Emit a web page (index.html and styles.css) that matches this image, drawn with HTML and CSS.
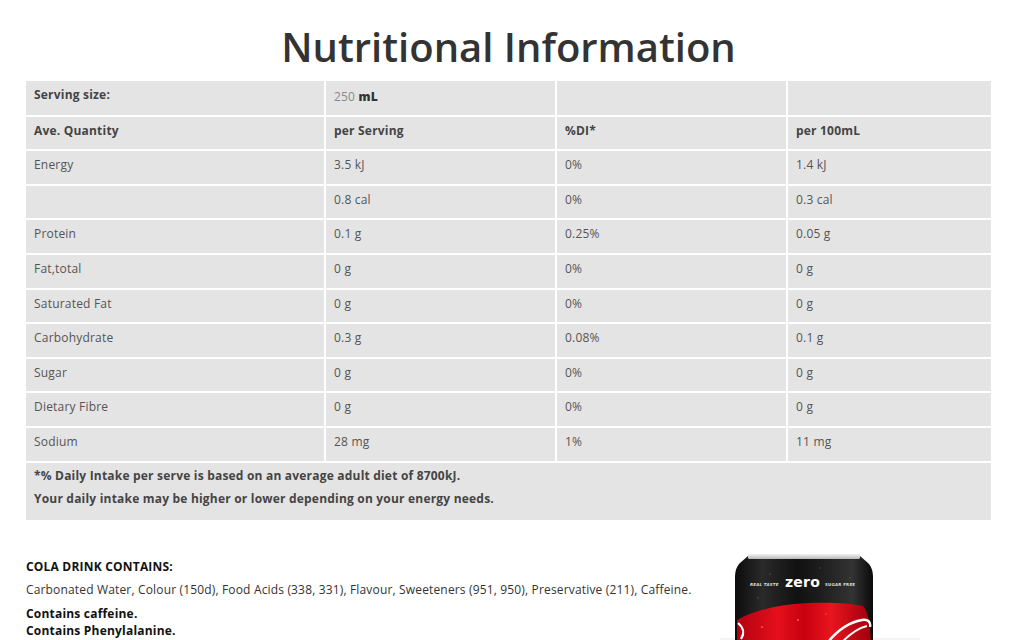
FILE: index.html
```html
<!DOCTYPE html>
<html lang="en">
<head>
<meta charset="utf-8">
<title>Nutritional Information</title>
<link rel="stylesheet" href="styles.css">
</head>
<body>
<main class="page">
  <h1 class="title">Nutritional Information</h1>
  <table class="nutri">
    <colgroup>
      <col class="c1"><col class="c2"><col class="c3"><col class="c4">
    </colgroup>
    <tbody>
      <tr class="head"><td>Serving size:</td><td class="serve"><span class="num">250</span> <b>mL</b></td><td></td><td></td></tr>
      <tr class="head"><td>Ave. Quantity</td><td>per Serving</td><td>%DI*</td><td>per 100mL</td></tr>
      <tr><td>Energy</td><td>3.5 kJ</td><td>0%</td><td>1.4 kJ</td></tr>
      <tr><td></td><td>0.8 cal</td><td>0%</td><td>0.3 cal</td></tr>
      <tr><td>Protein</td><td>0.1 g</td><td>0.25%</td><td>0.05 g</td></tr>
      <tr><td>Fat,total</td><td>0 g</td><td>0%</td><td>0 g</td></tr>
      <tr><td>Saturated Fat</td><td>0 g</td><td>0%</td><td>0 g</td></tr>
      <tr><td>Carbohydrate</td><td>0.3 g</td><td>0.08%</td><td>0.1 g</td></tr>
      <tr><td>Sugar</td><td>0 g</td><td>0%</td><td>0 g</td></tr>
      <tr><td>Dietary Fibre</td><td>0 g</td><td>0%</td><td>0 g</td></tr>
      <tr><td>Sodium</td><td>28 mg</td><td>1%</td><td>11 mg</td></tr>
      <tr class="foot"><td colspan="4">
        <p>*% Daily Intake per serve is based on an average adult diet of 8700kJ.</p>
        <p>Your daily intake may be higher or lower depending on your energy needs.</p>
      </td></tr>
    </tbody>
  </table>

  <section class="ingredients">
    <div class="ing-text">
      <h2 class="ing-title">COLA DRINK CONTAINS:</h2>
      <p class="ing-list">Carbonated Water, Colour (150d), Food Acids (338, 331), Flavour, Sweeteners (951, 950), Preservative (211), Caffeine.</p>
      <p class="ing-warn">Contains caffeine.<br>Contains Phenylalanine.</p>
    </div>
    <div class="can">
      <svg width="220" height="110" viewBox="0 0 220 110" xmlns="http://www.w3.org/2000/svg">
        <defs>
          <linearGradient id="body" x1="0" x2="1" y1="0" y2="0">
            <stop offset="0" stop-color="#0b0b0b"/>
            <stop offset="0.2" stop-color="#2a2a2a"/>
            <stop offset="0.45" stop-color="#111"/>
            <stop offset="0.6" stop-color="#1c1c1c"/>
            <stop offset="0.85" stop-color="#333"/>
            <stop offset="1" stop-color="#0a0a0a"/>
          </linearGradient>
          <linearGradient id="red" x1="0" x2="1" y1="0" y2="0">
            <stop offset="0" stop-color="#b30010"/>
            <stop offset="0.3" stop-color="#e5101c"/>
            <stop offset="0.5" stop-color="#c8000f"/>
            <stop offset="0.7" stop-color="#e9151f"/>
            <stop offset="1" stop-color="#a0000c"/>
          </linearGradient>
          <linearGradient id="rim" x1="0" x2="0" y1="0" y2="1">
            <stop offset="0" stop-color="#f2f2f2"/>
            <stop offset="1" stop-color="#b8b8b8"/>
          </linearGradient>
        </defs>
        <rect x="20" y="106" width="210" height="4" fill="#f4f4f4"/>
        <path d="M48 24 L40 31 C36 35 35 40 35 46 L35 110 L173 110 L173 46 C173 40 172 35 168 31 L160 24 Z" fill="url(#body)"/>
        <rect x="48" y="22" width="112" height="5" rx="1.5" fill="url(#rim)"/>
        <path d="M37 110 L37 88 C55 78 80 72 108 71 C132 70 150 71 163 74 C168 80 170 90 171 110 Z" fill="url(#red)"/>
        <path d="M38 91 C43 95 45 101 41 107" stroke="#fff" stroke-width="2.2" fill="none"/>
        <path d="M128 110 C138 98 150 90 162 88 C168 87 171 90 170 95" stroke="#fff" stroke-width="2.4" fill="none"/>
        <path d="M142 110 C150 102 158 96 167 94" stroke="#fff" stroke-width="1.8" fill="none"/>
        <text x="50" y="54" font-family="'DejaVu Sans', sans-serif" font-size="4" font-weight="bold" font-style="italic" fill="#ddd">REAL TASTE</text>
        <text x="85" y="55" font-family="'DejaVu Sans', sans-serif" font-size="14" font-weight="bold" fill="#fff">zero</text>
        <text x="125" y="54" font-family="'DejaVu Sans', sans-serif" font-size="4" font-weight="bold" fill="#ddd">SUGAR FREE</text>
        <circle cx="70" cy="42" r="0.8" fill="#555"/>
        <circle cx="120" cy="36" r="0.7" fill="#555"/>
        <circle cx="150" cy="46" r="0.8" fill="#555"/>
        <circle cx="58" cy="66" r="0.8" fill="#555"/>
        <circle cx="98" cy="88" r="1" fill="#f55"/>
        <circle cx="62" cy="95" r="1" fill="#f55"/>
        <circle cx="126" cy="82" r="0.8" fill="#f55"/>
      </svg>
    </div>
  </section>
</main>
</body>
</html>
```

FILE: styles.css
```css
html, body {
  margin: 0;
  padding: 0;
  background: #fff;
}

.page {
  font-family: "Open Sans", "Liberation Sans", Arial, sans-serif;
  color: #333;
  padding: 0 33px 0 26px;
  letter-spacing: 0.2px;
}

.title {
  margin: 0;
  padding-top: 22px;
  height: 81px;
  box-sizing: border-box;
  text-align: center;
  font-size: 40px;
  line-height: 50px;
  font-weight: 600;
  letter-spacing: 0;
  color: #333;
}

.nutri {
  width: 965px;
  border-collapse: collapse;
  background: #e4e4e4;
  font-size: 12px;
  color: #555;
}

.nutri .c1 { width: 299px; }
.nutri .c2 { width: 231px; }
.nutri .c3 { width: 231px; }
.nutri .c4 { width: 204px; }

.nutri td {
  border: 2px solid #fff;
  padding: 6px 8px 0;
  height: 34.6px;
  box-sizing: border-box;
  vertical-align: top;
  line-height: 16px;
}

.nutri tr:first-child td { border-top: 0; }
.nutri td:first-child { border-left: 0; }
.nutri td:last-child { border-right: 0; }
.nutri tr:last-child td { border-bottom: 0; }

.nutri .head td {
  font-weight: 700;
  color: #444;
}

.nutri .serve { padding-top: 8px; }
.nutri .serve .num { font-weight: 400; color: #888; }
.nutri .serve b { color: #333; }

.nutri .foot td {
  height: 58px;
  padding-top: 5px;
  font-weight: 700;
  color: #444;
}

.nutri .foot p {
  margin: 0 0 7px;
  line-height: 16px;
}

.ingredients {
  display: flex;
  justify-content: space-between;
  margin-top: 12px;
}

.ing-text {
  padding-top: 27px;
  font-size: 12px;
  color: #333;
}

.ing-title {
  margin: 0 0 7px;
  font-size: 12px;
  line-height: 16px;
  font-weight: 700;
  color: #111;
}

.ing-list {
  margin: 0 0 7px;
  line-height: 16px;
  letter-spacing: 0.16px;
}

.ing-warn {
  margin: 0;
  line-height: 17px;
  font-weight: 700;
  color: #111;
}

.can {
  margin-right: 71px;
  flex: none;
  align-self: flex-start;
}

.can svg { display: block; }
```
